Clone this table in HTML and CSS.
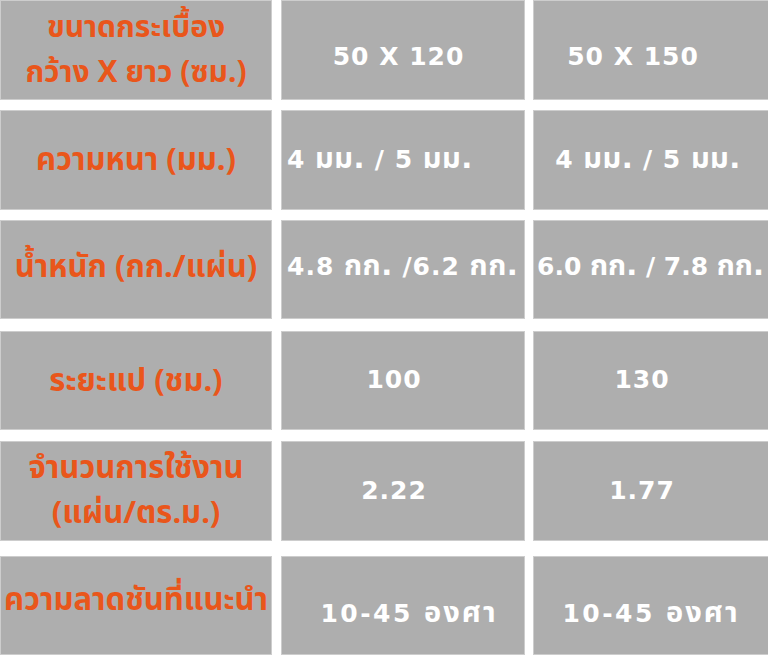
FILE: index.html
```html
<!DOCTYPE html>
<html lang="th">
<head>
<meta charset="utf-8">
<link rel="stylesheet" href="styles.css">
</head>
<body>
<div class="table">
  <div class="row r1">
    <div class="cell head">ขนาดกระเบื้อง<br>กว้าง X ยาว (ซม.)</div>
    <div class="cell val sz-a"><span>50 X 120</span></div>
    <div class="cell val sz-b"><span>50 X 150</span></div>
  </div>
  <div class="row r2">
    <div class="cell head">ความหนา (มม.)</div>
    <div class="cell val left"><span>4 <span class="th">มม.</span> / 5 <span class="th">มม.</span></span></div>
    <div class="cell val sz-c"><span>4 <span class="th">มม.</span> / 5 <span class="th">มม.</span></span></div>
  </div>
  <div class="row r3">
    <div class="cell head">น้ำหนัก (กก./แผ่น)</div>
    <div class="cell val left"><span>4.8 <span class="th">กก.</span> /6.2 <span class="th">กก.</span></span></div>
    <div class="cell val left tight"><span>6.0 <span class="th">กก.</span> / 7.8 <span class="th">กก.</span></span></div>
  </div>
  <div class="row r4">
    <div class="cell head">ระยะแป (ชม.)</div>
    <div class="cell val shift"><span>100</span></div>
    <div class="cell val shift"><span>130</span></div>
  </div>
  <div class="row r5">
    <div class="cell head">จำนวนการใช้งาน<br>(แผ่น/ตร.ม.)</div>
    <div class="cell val shift"><span>2.22</span></div>
    <div class="cell val shift"><span>1.77</span></div>
  </div>
  <div class="row r6">
    <div class="cell head wide">ความลาดชันที่แนะนำ</div>
    <div class="cell val sz-d"><span>10-45 <span class="th">องศา</span></span></div>
    <div class="cell val"><span>10-45 <span class="th">องศา</span></span></div>
  </div>
</div>
</body>
</html>
```
FILE: styles.css
```css
html, body {
  margin: 0;
  padding: 0;
  background: #ffffff;
}
body {
  width: 768px;
  height: 655px;
  overflow: hidden;
  font-family: "Noto Sans", "Noto Sans Thai", "Open Sans", sans-serif;
  font-weight: 700;
}
.table {
  display: flex;
  flex-direction: column;
}
.row {
  display: grid;
  grid-template-columns: 272px 244px 235px;
  column-gap: 9px;
}
.row > .cell:nth-child(3) {
  margin-left: -1px;
}
.r1 { height: 100px; margin-bottom: 10px; }
.r2 { height: 100px; margin-bottom: 10px; }
.r3 { height: 99px; margin-bottom: 12px; }
.r4 { height: 99px; margin-bottom: 11px; }
.r5 { height: 100px; margin-bottom: 15px; }
.r6 { height: 99px; }
.cell {
  box-sizing: border-box;
  background: #aeaeae;
  border: 1px solid #cdcdcd;
  display: flex;
  align-items: center;
  justify-content: center;
  text-align: center;
  white-space: nowrap;
}
.head {
  color: #e9561b;
  font-size: 31px;
  line-height: 45px;
  padding-bottom: 4px;
}
.r1 .head { font-size: 30px; }
.r3 .head { padding-bottom: 8px; }
.r4 .head { padding-bottom: 2px; }
.head.wide {
  padding-bottom: 14px;
}
.val {
  color: #ffffff;
  font-family: "DejaVu Sans", "Noto Sans Thai", sans-serif;
  font-size: 25px;
  letter-spacing: 1px;
  padding-bottom: 2px;
}
.val .th {
  font-size: 29px;
  letter-spacing: 0.5px;
}
.r1 .val { padding-top: 14px; }
.r6 .val { padding-top: 16px; letter-spacing: 2.5px; }
.r6 .val .th { letter-spacing: 2px; }
.val.left {
  justify-content: flex-start;
  padding-left: 5px;
}
.val.tight {
  padding-left: 3px;
  letter-spacing: 0;
}
.val.tight .th { letter-spacing: 0; }
.val.shift {
  padding-right: 18px;
}
.val.sz-a { padding-right: 9px; }
.val.sz-b { padding-right: 36px; }
.val.sz-c { padding-right: 6px; }
.val.sz-d { padding-left: 12px; }
.r3 .val { padding-bottom: 8px; }
.r4 .val { padding-bottom: 2px; }
```
